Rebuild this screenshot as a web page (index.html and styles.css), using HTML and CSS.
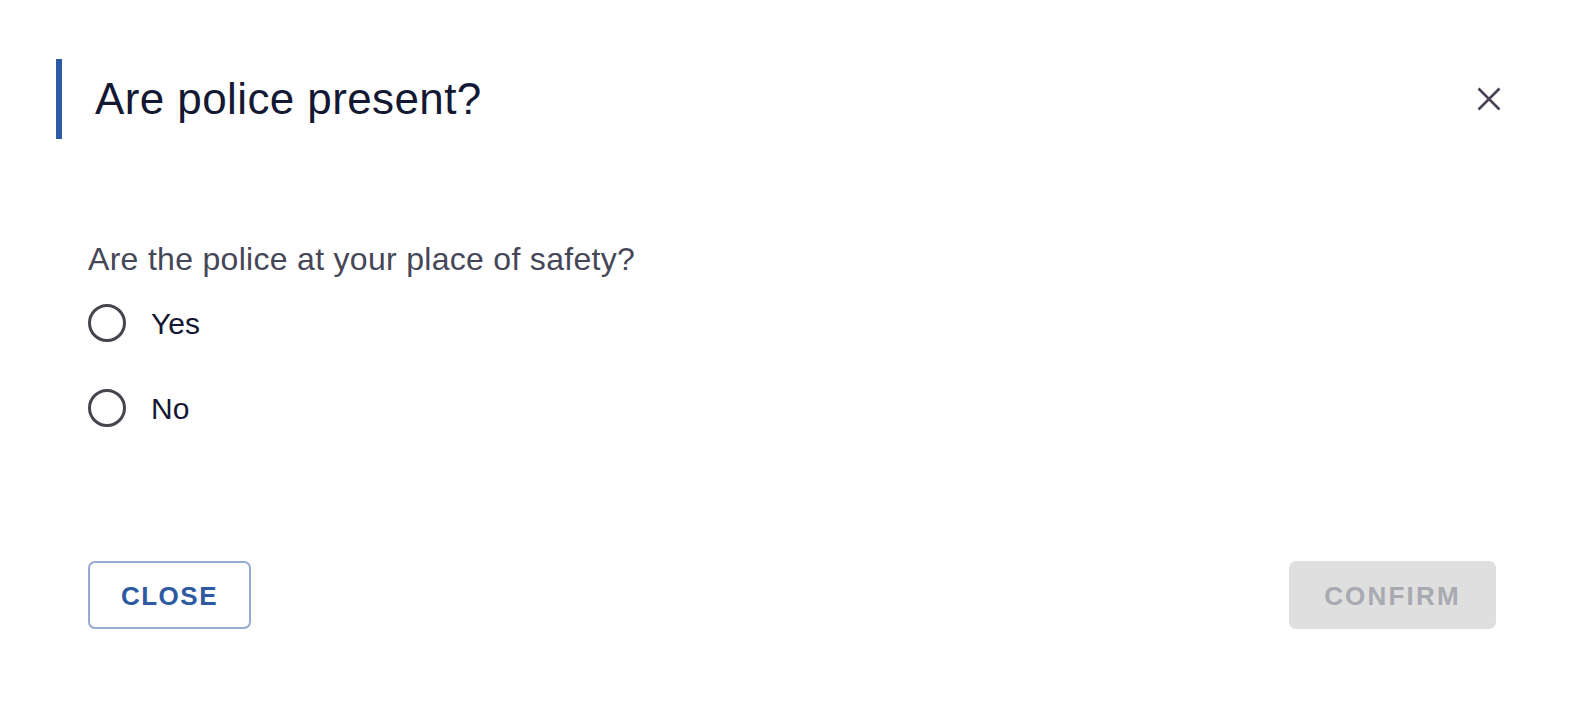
FILE: index.html
```html
<!DOCTYPE html>
<html lang="en">
<head>
    <meta charset="UTF-8">
    <meta name="viewport" content="width=device-width, initial-scale=1.0">
    <link rel="stylesheet" href="styles.css">
    <title>Are police present?</title>
</head>
<body>
    <div class="dialog">
        <div class="head">
            <h2 class="title">Are police present?</h2>
            <button class="close-x" aria-label="Close">
                <svg width="24" height="24" viewBox="0 0 24 24">
                    <path d="M1.5 1.5 L22.5 22.5 M22.5 1.5 L1.5 22.5" stroke="#4b4155" stroke-width="2.6" fill="none"/>
                </svg>
            </button>
        </div>

        <div class="content">
            <p class="question">Are the police at your place of safety?</p>
            <label class="option">
                <input type="radio" name="police" value="yes">
                <span class="circle"></span>
                <span class="option-text">Yes</span>
            </label>
            <label class="option">
                <input type="radio" name="police" value="no">
                <span class="circle"></span>
                <span class="option-text">No</span>
            </label>

            <div class="actions">
                <button class="btn btn-outline">CLOSE</button>
                <button class="btn btn-disabled" disabled>CONFIRM</button>
            </div>
        </div>
    </div>
</body>
</html>
```

FILE: styles.css
```css
body {
    font-family: 'Liberation Sans', Arial, sans-serif;
    margin: 0;
    padding: 0;
    background-color: #fff;
}

.dialog {
    padding: 59px 77px 0 56px;
}

.head {
    display: flex;
    align-items: center;
    justify-content: space-between;
    height: 80px;
    border-left: 6px solid #2e5aa5;
    padding-left: 33px;
}

.title {
    margin: 0;
    font-size: 44px;
    font-weight: normal;
    letter-spacing: 0.4px;
    line-height: 1;
    color: #131833;
}

.close-x {
    background: none;
    border: 0;
    padding: 0;
    width: 24px;
    height: 24px;
    cursor: pointer;
}

.close-x svg {
    display: block;
}

.content {
    padding: 0 5px 0 32px;
}

.question {
    margin: 100px 0 0 0;
    font-size: 32px;
    letter-spacing: 0.3px;
    line-height: 41px;
    color: #454757;
}

.option {
    display: flex;
    align-items: center;
    height: 85px;
    cursor: pointer;
}

.option input {
    display: none;
}

.circle {
    box-sizing: border-box;
    width: 38px;
    height: 38px;
    border: 3px solid #45454f;
    border-radius: 50%;
    margin-right: 25px;
}

.option-text {
    font-size: 30px;
    padding-top: 2px;
    color: #141833;
}

.actions {
    display: flex;
    justify-content: space-between;
    margin-top: 111px;
}

.btn {
    box-sizing: border-box;
    height: 68px;
    padding-top: 4px;
    border-radius: 7px;
    font-family: 'Liberation Sans', Arial, sans-serif;
    font-size: 26px;
    font-weight: bold;
    letter-spacing: 1.5px;
    cursor: pointer;
}

.btn-outline {
    width: 163px;
    background: #fff;
    border: 2px solid #96aad3;
    color: #2d5aa0;
}

.btn-disabled {
    width: 207px;
    background: #dfdfe0;
    border: 0;
    color: #a8aab2;
    letter-spacing: 2.2px;
    cursor: default;
}
```
